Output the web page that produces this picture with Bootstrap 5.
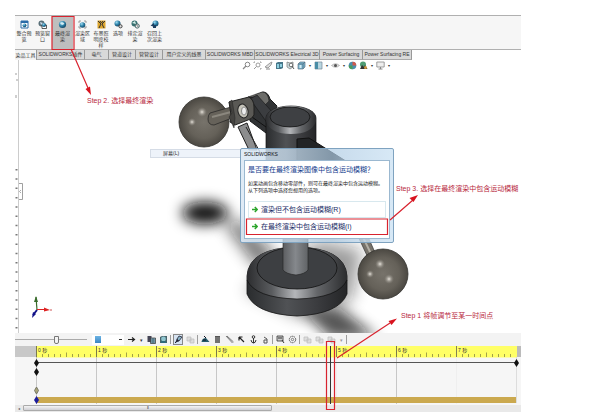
<!DOCTYPE html>
<html lang="zh-CN">
<head>
<meta charset="utf-8">
<meta name="viewport" content="width=device-width, initial-scale=1">
<title>SOLIDWORKS</title>
<link href="https://cdn.jsdelivr.net/npm/bootstrap@5.3.0/dist/css/bootstrap.min.css" rel="stylesheet">
<style>
body{font-family:"Liberation Sans","Noto Sans CJK SC",sans-serif;font-size:5px;line-height:6px;color:#333;background:#fff}
main{padding:15px 79px 0 15px}
svg{display:block}
button,select{font:inherit;color:inherit;border:0;background:none;padding:0}
.ribbon{height:35px;background:#f6f6f6;border-top:1px solid #b0b0b0;border-bottom:1px solid #b0b0b0;display:grid;grid-template-columns:18px 19px 21px 19px 18px 16px 18px 21px;overflow:hidden}
.ribbon button{padding-top:4px;display:flex;flex-direction:column;align-items:center;white-space:nowrap}
.ribbon button span{margin-top:1px}
.ribbon button.chosen{background:#bebebe}
.tabs{height:10px;display:grid;grid-template-columns:22px 48px 24px 27px 27px 43px 49px 65px 43px 49px}
.tabs button{background:#d9d9d9;border-right:1px solid #999;border-bottom:1px solid #aaa;white-space:nowrap;overflow:hidden;line-height:9px}
.tabs button.current{background:#f4f4f4;border-bottom:0}
.hud{top:0;left:227px;gap:2px;height:11px}
.hud button{width:9px}
.hud .drop{width:4px;font-size:4px}
.menustrip{left:135px;top:89px;width:91px;height:9px;background:#eef3fa;border:1px solid #d5dce6;padding-left:12px;line-height:7px}
.dlg{left:225px;top:88px;width:154px;padding:0 3px 3px;border:1px solid #7fa3c0;border-radius:2px;background:linear-gradient(90deg,#dce9f5e6,#aecbe3b0 60%,#d3e6f5e6)}
.dlg header{height:11px;line-height:11px;color:#111}
.dlg .pane{background:#fff;border:1px solid #9bb8d0;padding:4px 3px 3px}
.dlg h1{font-size:7px;line-height:10px;margin:0 0 5px;color:#123b8c}
.dlg h1,.choice{white-space:nowrap;font-weight:400}
.dlg p{margin:0 0 7px;line-height:7px;color:#222;white-space:nowrap}
.choice{height:17px;width:100%;border:1px solid #d8e8ee!important;font-size:7px!important;color:#1b2c66!important;display:flex;align-items:center;gap:3px;padding-left:3px!important}
.choice+.choice{border-color:#fff!important}
.tools{height:13px;background:#f3f3f3;gap:2px;overflow:hidden}
.tools button{width:10px;height:11px;display:grid;place-items:center}
.tools .drop{width:6px}
.tools .faded{color:#999}
.tools button.chosen{background:#d7e4f2;border:1px solid #888}
.zoomer{appearance:none;width:72px;height:9px;margin:0;background:linear-gradient(#aaa,#aaa) center/100% 1px no-repeat}
.zoomer::-webkit-slider-thumb{appearance:none;width:5px;height:8px;border:1px solid #777;border-radius:0 0 2px 2px;background:#f4f4f4}
.speed{appearance:none;width:32px;height:10px;color:transparent;margin-left:3px;background:linear-gradient(#6db4e4,#3a86c4) 3px center/6px 7px no-repeat,linear-gradient(#333,#333) 27px center/3px 1px no-repeat,#fff}
.vr{width:1px;height:9px;align-self:center;background:#777;opacity:.7}
.scroll{height:7px;background:#e9e9e9;padding-right:249px}
.scroll button{width:8px;font-size:4px;color:#555}
.scroll .thumb{height:6px;flex:1;border:1px solid #aaa;border-radius:1px;background:linear-gradient(#f4f4f4,#cfcfd4);font-size:4px;line-height:4px;text-align:center}
.notes{inset:0;pointer-events:none;z-index:5}
.notes text{font-size:7px;fill:#b82840}
</style>
<script src="https://cdn.jsdelivr.net/npm/bootstrap@5.3.0/dist/js/bootstrap.bundle.min.js"></script>
</head>
<body>
<svg width="0" height="0" class="position-absolute" aria-hidden="true">
<defs>
<radialGradient id="orb" cx=".35" cy=".3" r=".8"><stop offset="0" stop-color="#9fdcf2"/><stop offset=".5" stop-color="#2b7fa6"/><stop offset="1" stop-color="#123a55"/></radialGradient>
<symbol id="i-orb" viewBox="0 0 9 9"><circle cx="4.5" cy="4.5" r="3.600" fill="url(#orb)"/><path d="M2 3Q5 1 6.500 4L4 5Z" fill="#d5edf3"/></symbol>
<symbol id="i-win" viewBox="0 0 9 9"><path d="M1 1h7v7H1z" fill="#fff" stroke="#2b6ca8"/><path d="M1 1h7v2H1z" fill="#2b6ca8"/><circle cx="4.500" cy="5.300" r="1.900" fill="url(#orb)"/></symbol>
<symbol id="i-orbs" viewBox="0 0 9 9"><circle cx="3.500" cy="3.500" r="3" fill="#596f78"/><path d="M2 2l3 1-2 2z" fill="#cde"/><path d="M4 5h4.500v3.500H4z" fill="#fff" stroke="#333" stroke-width=".8"/><circle cx="6" cy="5" r="2" fill="url(#orb)"/></symbol>
<symbol id="i-area" viewBox="0 0 9 9"><circle cx="4.500" cy="5" r="2.800" fill="url(#orb)"/><path d="M1 3V1h2M6 1h2v2M8 6v2H6M3 8H1V6" fill="none" stroke="#888" stroke-width=".8"/></symbol>
<symbol id="i-film" viewBox="0 0 9 9"><path d="M.5.5h8v8h-8z" fill="#dca52c"/><path d="M1 1l3 3-2 4M8 1L5 4l2 4M3 1l1.500 2L6 1" fill="none" stroke="#333"/></symbol>
<symbol id="i-gear" viewBox="0 0 9 9"><circle cx="3.500" cy="3.500" r="3" fill="url(#orb)"/><circle cx="6.500" cy="6.300" r="1.600" fill="#ddd" stroke="#444"/></symbol>
<symbol id="i-clock" viewBox="0 0 9 9"><circle cx="3.500" cy="3.500" r="3" fill="#356f70"/><path d="M1 3l3-2 1 3z" fill="#d5eee7"/><circle cx="6.200" cy="6" r="2.100" fill="#fff" stroke="#466"/><path d="M6 4.500v1.700h1.500" stroke="#333" stroke-width=".6" fill="none"/></symbol>
<symbol id="i-back" viewBox="0 0 9 9"><circle cx="5.500" cy="3.500" r="3" fill="url(#orb)"/><path d="M.5 5.500L4 3v2h2v3H3V6.500z" fill="#1c3f60"/></symbol>
<symbol id="i-save" viewBox="0 0 9 9"><path d="M1 2l2-1h5v7H1z" fill="#47636a"/><circle cx="4.500" cy="4" r="2.400" fill="#8fc5cf"/><path d="M2 6h4l2 2H2z" fill="#2e6a7e"/></symbol>
<symbol id="i-zoom" viewBox="0 0 9 9"><circle cx="5.500" cy="3.500" r="2.300" fill="#fff" stroke="#888"/><path d="M4 5L1 8" stroke="#888" stroke-width="1.200"/></symbol>
<symbol id="i-zooma" viewBox="0 0 9 9"><circle cx="5" cy="4" r="2" fill="#fff" stroke="#888" stroke-width=".8"/><path d="M3.500 5.500L1 8M1 2V1h1M7 1h1v1M8 7v1H7" stroke="#999" fill="none"/></symbol>
<symbol id="i-zoomb" viewBox="0 0 9 9"><path d="M1 1l3 1 3-1v5L4 8 1 6z" fill="#ccdde0" stroke="#777" stroke-width=".7"/><circle cx="5" cy="4" r="1.800" fill="#fff" stroke="#555" stroke-width=".8"/><path d="M6 5l2 3" stroke="#555"/></symbol>
<symbol id="i-pen" viewBox="0 0 9 9"><path d="M1 6l5-4 2-1-1 3-3 3z" fill="#ddd" stroke="#888" stroke-width=".8"/><path d="M2 8h4" stroke="#888"/></symbol>
<symbol id="i-cube" viewBox="0 0 9 9"><path d="M1 3l2-2h5v5L6 8H1z" fill="#74b3cc" stroke="#678" stroke-width=".7"/><path d="M1 3h5v5M6 3l2-2" stroke="#567" stroke-width=".7" fill="none"/><path d="M2.500 4h2v3h-2z" fill="#d8edf4"/></symbol>
<symbol id="i-section" viewBox="0 0 9 9"><path d="M1 2l2-1h5v6L6 8H1z" fill="#48778a"/><path d="M2 3h2v4H2zM5 3h2v3H5z" fill="#8fd0e0"/></symbol>
<symbol id="i-style" viewBox="0 0 9 9"><path d="M1 1h7v7H1z" fill="#b8d6e0" stroke="#789" stroke-width=".7"/><path d="M1 1h3v7H1z" fill="#4a8da6"/></symbol>
<symbol id="i-eye" viewBox="0 0 9 9"><path d="M.5 4.500Q4.500 1 8.500 4.500 4.500 8 .5 4.500z" fill="#ddd" stroke="#999" stroke-width=".6"/><circle cx="4.500" cy="4.500" r="1.500" fill="#555"/></symbol>
<symbol id="i-color" viewBox="0 0 9 9"><circle cx="4.500" cy="4.500" r="3.800" fill="#4b8fae"/><path d="M4.500.7A3.800 3.800 0 0 1 8.300 4.500H4.500z" fill="#d1584b"/><path d="M.7 4.500A3.800 3.800 0 0 0 4.500 8.300V4.500z" fill="#4c9c58"/></symbol>
<symbol id="i-scene" viewBox="0 0 9 9"><circle cx="4" cy="3.500" r="3" fill="#4f9d75"/><path d="M1 8l2-4 2 2 1-2 2.500 4z" fill="#333"/><circle cx="6.500" cy="6.500" r="1.500" fill="#c94"/></symbol>
<symbol id="i-screen" viewBox="0 0 9 9"><path d="M.8 1h7.400v5H.8z" fill="#eee" stroke="#888" stroke-width=".8"/><path d="M4.500 6v2M2.500 8h4" stroke="#888"/></symbol>
<symbol id="i-calc" viewBox="0 0 9 9"><path d="M.5 1h4v6h-4z" fill="#445"/><path d="M3.500 3h5v5.500h-5z" fill="#8ab" stroke="#333" stroke-width=".7"/><path d="M4 5h4M4 7h4M6 3v5" stroke="#245" stroke-width=".5"/></symbol>
<symbol id="i-key" viewBox="0 0 9 9"><path d="M5 1l3 1-3 4-3 1 1-3zM3 4l2 2" fill="#8bb4c8" stroke="#223" stroke-width=".8"/><path d="M1 8l3-3" stroke="#223"/></symbol>
<symbol id="i-faint" viewBox="0 0 9 9"><path d="M1 2h4v4H1zM4 4h4v4H4z" fill="#ddd" stroke="#bbb" stroke-width=".7"/></symbol>
<symbol id="i-motor" viewBox="0 0 9 9"><path d="M.5 7Q1 3 5 3l3.500 4z" fill="#245c6c"/><path d="M3 1l2 2M2 5h3" stroke="#112"/></symbol>
<symbol id="i-stack" viewBox="0 0 9 9"><path d="M2 1h5v7H2z" fill="#555"/><path d="M2 3h5M2 5h5M2 7h5" stroke="#bbb" stroke-width=".6"/></symbol>
<symbol id="i-line" viewBox="0 0 9 9"><path d="M1 1l6.500 7M2 1l6.500 6" stroke="#444" stroke-width=".7"/></symbol>
<symbol id="i-cursor" viewBox="0 0 9 9"><path d="M2 2h3.500M2 2v3.500M2 2l5 5" stroke="#222" stroke-width="1.200" fill="none"/></symbol>
<symbol id="i-clip" viewBox="0 0 9 9"><circle cx="4.500" cy="2" r="1.300" fill="none" stroke="#333"/><path d="M4.500 3v5M2 5q.5 3 2.500 3t2.500-3" fill="none" stroke="#333"/></symbol>
<symbol id="i-hook" viewBox="0 0 9 9"><path d="M3 2l3 2v4H3V5h3" fill="none" stroke="#555"/></symbol>
<symbol id="i-flag" viewBox="0 0 9 9"><path d="M1 1h6v5H1z" fill="#ccc" stroke="#333" stroke-width=".8"/><path d="M2 3h4M6 5l2 3" stroke="#333"/></symbol>
<symbol id="i-cog" viewBox="0 0 9 9"><circle cx="4.500" cy="4.500" r="3.200" fill="none" stroke="#555" stroke-dasharray="1.500 .5"/><circle cx="4.500" cy="4.500" r="1.200" fill="none" stroke="#555" stroke-width=".7"/></symbol>
</defs></svg>

<main><div class="position-relative">
<div class="ribbon">
<button><svg width="9" height="9"><use href="#i-win"/></svg><span>整合预<br>览</span></button>
<button><svg width="9" height="9"><use href="#i-orbs"/></svg><span>预览窗<br>口</span></button>
<button class="chosen"><svg width="9" height="9"><use href="#i-orb"/></svg><span>最终渲<br>染</span></button>
<button><svg width="9" height="9"><use href="#i-area"/></svg><span>渲染区<br>域</span></button>
<button><svg width="9" height="9"><use href="#i-film"/></svg><span>布景照<br>明度校<br>样</span></button>
<button><svg width="9" height="9"><use href="#i-gear"/></svg><span>选项</span></button>
<button><svg width="9" height="9"><use href="#i-clock"/></svg><span>排定渲<br>染</span></button>
<button><svg width="9" height="9"><use href="#i-back"/></svg><span>召回上<br>次渲染</span></button>
</div>
<nav class="tabs">
<button class="current">染品工具</button><button>SOLIDWORKS插件</button><button>电气</button><button>管道设计</button><button>管管设计</button><button>用户定义的线景</button><button>SOLIDWORKS MBD</button><button>SOLIDWORKS Electrical 3D</button><button>Power Surfacing</button><button>Power Surfacing RE</button>
</nav>

<section class="position-relative">
<svg class="w-100" viewBox="15 60 506 273" role="img" aria-label="模型">
<defs>
<filter id="b8" x="-60%" y="-60%" width="220%" height="220%"><feGaussianBlur stdDeviation="8"/></filter>
<filter id="b6" x="-60%" y="-150%" width="220%" height="400%"><feGaussianBlur stdDeviation="7"/></filter>
<radialGradient id="ball"><stop offset="0" stop-color="#77736b"/><stop offset=".65" stop-color="#656159"/><stop offset="1" stop-color="#4b4842"/></radialGradient>
<radialGradient id="spot"><stop offset="0" stop-color="#e8e4dc"/><stop offset="1" stop-color="#8a867e" stop-opacity="0"/></radialGradient>
<linearGradient id="cyl"><stop offset="0" stop-color="#2a2c2e"/><stop offset=".4" stop-color="#505255"/><stop offset=".7" stop-color="#3b3c3f"/><stop offset="1" stop-color="#242527"/></linearGradient>
<linearGradient id="rim"><stop offset="0" stop-color="#2c2d2f"/><stop offset=".25" stop-color="#5a5c5f"/><stop offset=".48" stop-color="#b4b6b9"/><stop offset=".7" stop-color="#65676a"/><stop offset="1" stop-color="#2b2c2e"/></linearGradient>
<linearGradient id="post"><stop offset="0" stop-color="#5c5e61"/><stop offset=".5" stop-color="#85888c"/><stop offset="1" stop-color="#606366"/></linearGradient>
</defs>
<g fill="#111">
<ellipse cx="205" cy="213" rx="23" ry="11" filter="url(#b6)"/>
<path d="M222 220L242 222 278 258 258 268Z" opacity=".6" filter="url(#b8)"/>
<path d="M244 290L300 318 352 300 362 250 320 240Z" opacity=".4" filter="url(#b8)"/>
<path d="M300 308L340 308 378 338 330 338Z" opacity=".7" filter="url(#b6)"/>
</g>
<path d="M356 232l9-2 12 27-7 5z" fill="#77736b" stroke="#333" stroke-width=".7"/><path d="M361 233l12 25" stroke="#b3afa5" stroke-width="2"/>
<path d="M238 127l9-4 10 27h-8z" fill="#8c8d8e" stroke="#222"/>
<path d="M246 127l14 25" stroke="#222"/>
<path d="M249 98l14-6q5 0 7 7l7 7-11 27-16-12z" fill="#303234" stroke="#1b1c1d"/>
<path d="M248 97l14-5q6 0 7 9l-5 5-9-9z" fill="#6d6d6a" stroke="#222" stroke-width=".6"/>
<path d="M250 99l7-4 17 19-6 10z" fill="#3b3d40" stroke="#151515" stroke-width=".6"/><path d="M252 117l14 10" stroke="#111" fill="none"/>
<circle cx="204" cy="122" r="25" fill="url(#ball)" stroke="#34322e" stroke-width=".8"/>
<circle cx="202" cy="112" r="5" fill="url(#spot)"/><circle cx="192" cy="122" r="4" fill="url(#spot)"/>
<path d="M210 113l21-6 1 11-18 7q-6 0-6-6 0-4 2-6z" fill="#66625a" stroke="#222" stroke-width=".7"/><path d="M212 117l19-5" stroke="#8b877e" stroke-width="2"/>
<path d="M229 102l20-5q5 3 5 10v8q-2 4-6 5l-13 5-5-3 1-7z" fill="#5a5955" stroke="#1f1f1e"/>
<path d="M229 102l3-2 3 18-1 10-5-11 3-4z" fill="#444340" stroke="#222" stroke-width=".5"/>
<ellipse cx="243" cy="111" rx="5" ry="7" fill="#c5c3b9" stroke="#222" transform="rotate(-15 243 111)"/><ellipse cx="244" cy="111" rx="2.500" ry="4" fill="#eee" stroke="#666" stroke-width=".7"/>
<path d="M266 118v62h50v-62a25 12 0 0 0-50 0z" fill="url(#cyl)" stroke="#111" stroke-width=".7"/>
<path d="M266 118a25 12 0 0 1 50 0v3q-4 13-25 13t-25-13z" fill="url(#rim)"/>
<ellipse cx="290" cy="117" rx="20" ry="10" fill="#3e4043" stroke="#111" stroke-width=".8"/>
<path d="M297 139l12-1 40 25-52-2z" fill="#222426" stroke="#111"/>
<path d="M247 276q2-28 50-29 48 1 50 29v18q-8 20-50 22-42-2-50-22z" fill="url(#cyl)" stroke="#151515" stroke-width=".8"/>
<path d="M247 276q2-28 50-29 48 1 50 29v3q-8 19-50 20-42-1-50-20z" fill="url(#rim)"/>
<path d="M247 280q8 18 50 19 42-1 50-19" fill="none" stroke="#111" stroke-width=".7"/>
<ellipse cx="297" cy="268" rx="40" ry="21" fill="#3d3f42" stroke="#111" stroke-width=".8"/>
<path d="M283 232h25v38q-3 4-12 5-10-1-13-5z" fill="url(#post)" stroke="#222" stroke-width=".6"/>
<circle cx="383" cy="274" r="25" fill="url(#ball)" stroke="#34322e" stroke-width=".8"/>
<circle cx="380" cy="264" r="5" fill="url(#spot)"/><circle cx="370" cy="274" r="4" fill="url(#spot)"/><circle cx="389" cy="279" r="5" fill="url(#spot)"/>
<path d="M18.500 60V333" stroke="#ccc"/><path d="M16 73v2M16 80h2M16 95v3" stroke="#777" stroke-width=".7"/>
<path d="M19 183.500h3.500v16H19" fill="#fff" stroke="#888" stroke-width=".8"/><path d="M21 190l-1.500 1.500 1.500 1.500" fill="none" stroke="#555" stroke-width=".5"/>
<path d="M16.500 169V332" stroke="#777" stroke-width="2" stroke-dasharray="1.500 7.800"/>
<path d="M37 310l-1-13" stroke="#386b2a" stroke-width="1.200"/><path d="M34 302l2-6 2 6z" fill="#386b2a"/><path d="M37 309.500h8" stroke="#d22"/><path d="M44 307.500l6 2.500-6 1.500z" fill="#d22"/><path d="M37 310l-4 5" stroke="#118" stroke-width="2"/><path d="M32 318l1-6 3 2z" fill="#118"/><path d="M50 309l2 2m0-2l-2 2" stroke="#c55" stroke-width=".5"/>
</svg>
<div class="hud position-absolute d-flex align-items-center">
<button aria-label="整屏显示"><svg width="9" height="9"><use href="#i-zoom"/></svg></button>
<button aria-label="局部放大"><svg width="9" height="9"><use href="#i-zooma"/></svg></button>
<button aria-label="上一视图"><svg width="9" height="9"><use href="#i-pen"/></svg></button>
<button aria-label="剖面"><svg width="9" height="9"><use href="#i-section"/></svg></button>
<button aria-label="注解"><svg width="9" height="9"><use href="#i-zoomb"/></svg></button>
<button aria-label="视图定向"><svg width="9" height="9"><use href="#i-cube"/></svg></button><button class="drop">▾</button>
<button aria-label="显示样式"><svg width="9" height="9"><use href="#i-style"/></svg></button><button class="drop">▾</button>
<button aria-label="隐藏"><svg width="9" height="9"><use href="#i-eye"/></svg></button><button class="drop">▾</button>
<button aria-label="外观"><svg width="9" height="9"><use href="#i-color"/></svg></button>
<button aria-label="布景"><svg width="9" height="9"><use href="#i-scene"/></svg></button><button class="drop">▾</button>
<button aria-label="视图设定"><svg width="9" height="9"><use href="#i-screen"/></svg></button><button class="drop">▾</button>
</div>
<div class="menustrip position-absolute">屏幕(L)</div>
<div class="dlg position-absolute" role="dialog" aria-labelledby="ask">
<header>SOLIDWORKS</header>
<div class="pane">
<h1 id="ask">是否要在最终渲染图像中包含运动模糊？</h1>
<p>如果动画包含移动零部件，则可在最终渲染中包含运动模糊。<br>从下列选项中选择您想用的选项。</p>
<button class="choice"><svg width="6" height="7" viewBox="0 0 6 7"><path d="M0 3.500h5M2.800 1L5.300 3.500 2.800 6" fill="none" stroke="#2ba52b" stroke-width="1.500"/></svg>渲染但不包含运动模糊(R)</button>
<button class="choice"><svg width="6" height="7" viewBox="0 0 6 7"><path d="M0 3.500h5M2.800 1L5.300 3.500 2.800 6" fill="none" stroke="#2ba52b" stroke-width="1.500"/></svg>在最终渲染中包含运动模糊(I)</button>
</div></div>
</section>

<div class="tools d-flex align-items-center">
<input class="zoomer" type="range" min="0" max="100" value="58" aria-label="缩放">
<select class="speed" aria-label="播放速度"><option label=" ">1</option></select>
<button aria-label="播放模式"><svg width="9" height="9" viewBox="0 0 9 9"><path d="M1 4.500h6M5 2.500l2.500 2L5 6.500" stroke="#222" stroke-width="1.200" fill="none"/></svg></button>
<button class="drop" aria-label="更多">▾</button>
<button aria-label="计算"><svg width="9" height="9"><use href="#i-calc"/></svg></button>
<button aria-label="保存动画"><svg width="9" height="9"><use href="#i-save"/></svg></button>
<span class="vr"></span>
<button class="chosen" aria-label="自动键码"><svg width="9" height="9"><use href="#i-key"/></svg></button>
<button aria-label="添加键码"><svg width="9" height="9"><use href="#i-faint"/></svg></button>
<span class="vr"></span>
<button aria-label="马达"><svg width="9" height="9"><use href="#i-motor"/></svg></button>
<button aria-label="弹簧"><svg width="9" height="9"><use href="#i-stack"/></svg></button>
<button aria-label="阻尼"><svg width="9" height="9"><use href="#i-line"/></svg></button>
<button aria-label="力"><svg width="9" height="9"><use href="#i-cursor"/></svg></button>
<button aria-label="接触"><svg width="9" height="9"><use href="#i-clip"/></svg></button>
<button aria-label="引力"><svg width="9" height="9"><use href="#i-hook"/></svg></button>
<span class="vr"></span>
<button aria-label="结果"><svg width="9" height="9"><use href="#i-flag"/></svg></button>
<button aria-label="属性"><svg width="9" height="9"><use href="#i-cog"/></svg></button>
<span class="vr"></span>
<button aria-label="模拟"><svg width="9" height="9"><use href="#i-faint"/></svg></button>
<button aria-label="夹具"><svg width="9" height="9"><use href="#i-faint"/></svg></button>
<button aria-label="网格"><svg width="9" height="9"><use href="#i-faint"/></svg></button>
<button class="drop faded" aria-label="更多模拟">▾</button>
<span class="vr"></span>
</div>

<svg id="timeline" class="w-100" viewBox="15 346 506 59" font-size="5" fill="#333">
<path d="M15 346h506v59H15z" fill="#f6f6f6"/><path d="M15 346h21v11H15z" fill="#c8c8c8"/><path d="M36 346h481v11.500H36z" fill="#ffff66"/><path d="M517 346h4v11h-4z" fill="#bbb"/>
<g id="marks"></g>
<path d="M37 362.500h480" stroke="#555"/><path d="M37 397h480v6H37z" fill="#cba94f"/>
<path d="M516.500 357v46" stroke="#ddd"/>
<g fill="#111"><path d="M36.500 359l2.500 4-2.500 4-2.500-4zM36.500 368l2.500 4-2.500 4-2.500-4zM516.500 359l2.500 4-2.500 4-2.500-4z"/></g>
<path d="M36.500 387l2 3.500-2 3.500-2-3.500z" fill="#a9a678" stroke="#776"/><path d="M36.500 396l2.500 4-2.500 4-2.500-4z" fill="#1c1c9c"/>
<path d="M330.500 346v58" stroke="#333"/>
</svg>
<div class="scroll d-flex"><button aria-label="向左">◂</button><div class="thumb">⦀</div></div>

<svg class="notes position-absolute w-100 h-100" viewBox="15 15 506 397">
<g fill="none" stroke="#d8232f" stroke-width="1.200"><path d="M52 16.500h22v33H52zM246.500 219h141v15.500h-141zM326.500 341.500h8v68h-8z"/><path d="M71 49l17 39M390 220l23-20M337 358l53-35"/></g>
<path d="M91 95l-5.500-6 4.500-2.500zM418 195l-4.500 7-4-4zM397 318.500l-5.500 6.500-3-4z" fill="#d8131f"/>
<text x="87" y="103">Step 2. 选择最终渲染</text>
<text x="396" y="191">Step 3. 选择在最终渲染中包含运动模糊</text>
<text x="401" y="318">Step 1 将帧调节至某一时间点</text>
</svg>
</div></main>
<script>
let marks='';
for(let i=0;i<80;i++){
  const x=36.5+i*6;
  if(i%10===0){
    const faint=i===50||i===70;
    marks+=`<path d="M${x} 346v58" stroke="${faint?'#eee':'#bbb'}" stroke-width=".8"/><path d="M${x} 346v11" stroke="#663" stroke-width=".8"/><text x="${x+1.5}" y="351.500">${i/10} 秒</text>`;
  }else marks+=`<path d="M${x} ${i%5?354:352.5}V357" stroke="#884" stroke-width=".8"/>`;
}
document.getElementById('marks').innerHTML=marks;
</script>
</body>
</html>
